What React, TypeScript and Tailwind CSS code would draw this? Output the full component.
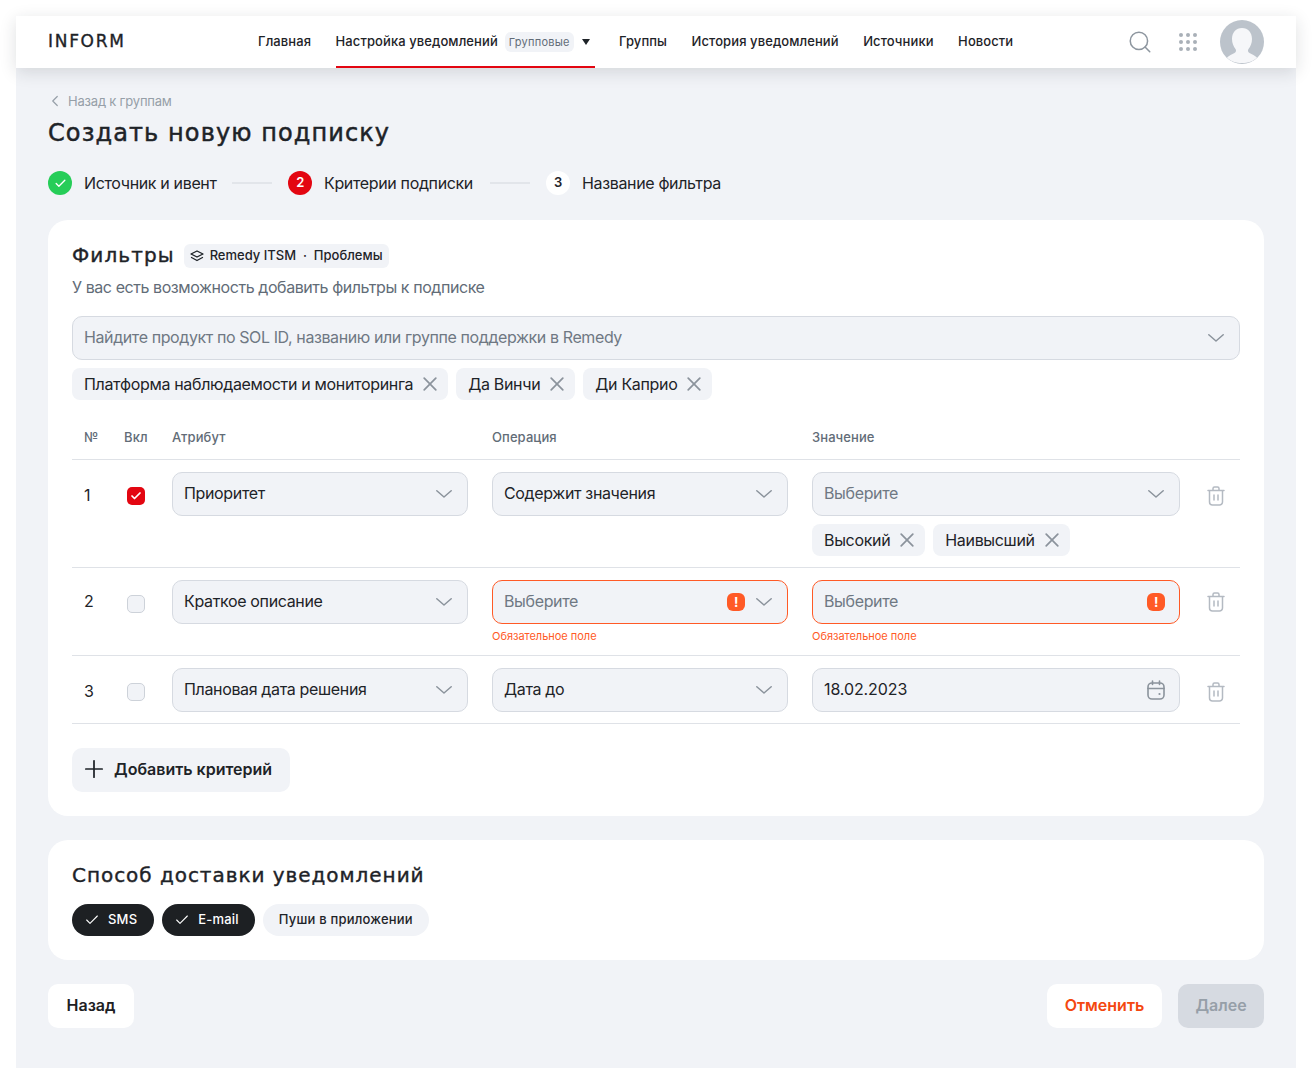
import React from 'react';
import { Check, ChevronLeft, Plus, Search } from 'lucide-react';

const NAV_ITEMS = ['Группы', 'История уведомлений', 'Источники', 'Новости'];

function Chevron() {
  return (
    <svg width="16" height="8" viewBox="0 0 16 8" fill="none" className="text-[#8b939c]">
      <path d="M0.8 0.8 8 7 15.2 0.8" stroke="currentColor" strokeWidth="1.5" strokeLinecap="round" strokeLinejoin="round" />
    </svg>
  );
}

function CloseIcon() {
  return (
    <svg width="14" height="14" viewBox="0 0 14 14" fill="none" className="text-[#8b939c]">
      <path d="M1.2 1.200 12.800 12.800M12.800 1.200 1.200 12.800" stroke="currentColor" strokeWidth="1.7" strokeLinecap="round" />
    </svg>
  );
}

function TrashIcon() {
  return (
    <svg width="18" height="20" viewBox="0 0 18 20" fill="none" className="text-[#b4bac2]">
      <path d="M1 4.5h16M6 4V2.5A1.5 1.5 0 0 1 7.500 1h3A1.500 1.500 0 0 1 12 2.500V4" stroke="currentColor" strokeWidth="1.500" strokeLinecap="round" />
      <path d="M2.500 4.500V16a3 3 0 0 0 3 3h7a3 3 0 0 0 3-3V4.500" stroke="currentColor" strokeWidth="1.500" />
      <path d="M7 9v5M11 9v5" stroke="currentColor" strokeWidth="1.500" strokeLinecap="round" />
    </svg>
  );
}

function CalendarIcon() {
  return (
    <svg width="18" height="20" viewBox="0 0 18 20" fill="none" className="-mr-px text-[#8b939c]">
      <rect x="1" y="3" width="16" height="16" rx="4" stroke="currentColor" strokeWidth="1.600" />
      <path d="M1 8.500h16M5.500 1v3.500M12.500 1v3.500" stroke="currentColor" strokeWidth="1.600" strokeLinecap="round" />
      <circle cx="12.500" cy="14" r="1.100" fill="currentColor" />
    </svg>
  );
}

function LayersIcon() {
  return (
    <svg width="14" height="12" viewBox="0 0 14 12" fill="none" className="text-[#1e2328]">
      <path d="M7 1 13 4 7 7 1 4Z" stroke="currentColor" strokeWidth="1.300" strokeLinejoin="round" />
      <path d="M1.500 7.500 7 10.500 12.500 7.500" stroke="currentColor" strokeWidth="1.300" strokeLinecap="round" strokeLinejoin="round" />
    </svg>
  );
}

function AlertBadge({ className = '' }: { className?: string }) {
  return (
    <span className={`flex h-[18px] w-[18px] items-center justify-center rounded-[6px] bg-[#ff5a26] text-[13px] leading-none font-bold text-white ${className}`}>!</span>
  );
}

function Chip({ label }: { label: string }) {
  return (
    <span className="flex h-8 items-center gap-[10px] rounded-lg bg-[#f1f3f7] pr-[11px] pl-3 text-base tracking-[-0.33px] text-[#1e2328]">
      {label}
      <CloseIcon />
    </span>
  );
}

function Field({ value, placeholder, error, right }: {
  value?: React.ReactNode;
  placeholder?: React.ReactNode;
  error?: boolean;
  right?: React.ReactNode;
}) {
  return (
    <div className={`flex h-11 items-center justify-between rounded-[10px] border bg-[#f1f3f7] pr-[15px] pl-[11px] text-base tracking-[-0.35px] ${error ? 'border-[#ff5a26]' : 'border-[#d6dae1]'}`}>
      <span className={`pb-[2px] ${value ? 'text-[#1e2328]' : 'text-[#6f7883]'}`}>{value || placeholder}</span>
      <span className="flex items-center gap-[11px]">{right ?? <Chevron />}</span>
    </div>
  );
}

function ErrorText() {
  return <p className="mt-1 text-[11px] leading-4 tracking-[-0.02px] text-[#ff5a26]">Обязательное поле</p>;
}

function Checkbox({ checked }: { checked?: boolean }) {
  return checked ? (
    <span className="flex h-[18px] w-[18px] items-center justify-center rounded-[5px] bg-[#e30611]">
      <Check size={12} strokeWidth={3.500} className="text-white" />
    </span>
  ) : (
    <span className="h-[18px] w-[18px] rounded-[5px] border border-[#cdd2d9] bg-[#f1f3f7]" />
  );
}

function Row({ num, checked, attribute, operation, value, numTop, trashTop = 'pt-1' }: {
  num: number;
  checked?: boolean;
  attribute: React.ReactNode;
  operation: React.ReactNode;
  value: React.ReactNode;
  numTop: string;
  trashTop?: string;
}) {
  return (
    <div className="flex border-b border-[#dfe2e7] pt-3 pb-[11px]">
      <div className={`w-[52px] pl-3 text-base leading-6 text-[#1e2328] ${numTop}`}>{num}</div>
      <div className="flex h-11 w-12 items-center pt-[3px] pl-[3px]">
        <Checkbox checked={checked} />
      </div>
      <div className="w-[296px]">{attribute}</div>
      <div className="ml-6 w-[296px]">{operation}</div>
      <div className="ml-6 w-[368px]">{value}</div>
      <div className={`flex h-11 flex-1 items-center justify-end pr-[15px] ${trashTop}`}>
        <TrashIcon />
      </div>
    </div>
  );
}

export default function App() {
  return (
    <div className="h-[1068px] overflow-hidden bg-white px-4 pt-4 font-['Inter',sans-serif]">
      <div className="h-[1052px] bg-[#f1f3f7]">
        <header className="flex h-[52px] items-center bg-white px-8 shadow-[0_4px_16px_rgba(30,35,40,0.14)]">
          <div className="w-[210px] font-['DejaVu_Sans',sans-serif] text-[17px] tracking-[1.7px] text-[#1e2328] [-webkit-text-stroke:0.35px_#1e2328]">INFORM</div>
          <nav className="flex h-full items-stretch gap-[24.5px] text-[13px] font-medium tracking-[0.09px] text-[#1e2328]">
            <span className="flex items-center">Главная</span>
            <span className="flex w-[259px] items-center border-b-2 border-[#e30611] pt-[2px]">
              Настройка уведомлений
              <span className="ml-[7px] rounded-md bg-[#f1f3f7] px-1 py-[2px] text-[11px] font-normal tracking-[0.25px] text-[#626c77]">Групповые</span>
              <svg width="8" height="6" viewBox="0 0 8 6" className="ml-2 text-[#1e2328]">
                <path d="M0 0h8L4 6Z" fill="currentColor" />
              </svg>
            </span>
            {NAV_ITEMS.map((item) => (
              <span key={item} className="flex items-center">{item}</span>
            ))}
          </nav>
          <div className="ml-auto flex items-center">
            <Search size={26} strokeWidth={1.400} className="text-[#8d969f]" />
            <div className="mr-[23px] ml-[26px] grid grid-cols-3 gap-[3px]">
              {Array.from({ length: 9 }).map((_, i) => (
                <span key={i} className="h-1 w-1 rounded-full bg-[#a9b0b8]" />
              ))}
            </div>
            <div className="h-11 w-11 overflow-hidden rounded-full bg-[#bcc3cb]">
              <svg width="44" height="44" viewBox="0 0 44 44">
                <path d="M22 8c-6 0-10 4.500-10 11 0 4 1.500 7.500 3.500 10 1 1.500 0.500 3-1 4-2.500 1.500-5.500 2.500-7.500 4.500C10.500 41.500 16 43 22 43s11.500-1.500 15-5.500c-2-2-5-3-7.500-4.500-1.500-1-2-2.500-1-4 2-2.500 3.500-6 3.500-10 0-6.500-4-11-10-11Z" fill="#f6f7f9" />
              </svg>
            </div>
          </div>
        </header>

        <main className="px-8">
          <div className="flex items-center gap-1 pt-[23px] text-[13px] leading-5 tracking-[-0.2px] text-[#969fa8]">
            <ChevronLeft size={18} strokeWidth={1.600} className="-ml-[2px]" />
            <span>Назад к группам</span>
          </div>
          <h1 className="mt-[6px] font-['DejaVu_Sans',sans-serif] text-2xl leading-8 tracking-[1.1px] text-[#1e2328] [-webkit-text-stroke:0.5px_#1e2328]">Создать новую подписку</h1>

          <div className="mt-[22px] flex h-6 items-center text-base tracking-[-0.35px] whitespace-nowrap text-[#1e2328]">
            <span className="flex h-6 w-6 items-center justify-center rounded-full bg-[#26cd58]">
              <Check size={13} strokeWidth={2.500} className="text-white" />
            </span>
            <span className="ml-3 w-[132px]">Источник и ивент</span>
            <span className="mx-4 h-[2px] w-10 bg-[#e2e5ea]" />
            <span className="flex h-6 w-6 items-center justify-center rounded-full bg-[#e30611] text-[13px] font-semibold text-white">2</span>
            <span className="ml-3 w-[150px]">Критерии подписки</span>
            <span className="mx-4 h-[2px] w-10 bg-[#e2e5ea]" />
            <span className="flex h-6 w-6 items-center justify-center rounded-full bg-white text-[13px] font-semibold">3</span>
            <span className="ml-3">Название фильтра</span>
          </div>

          <section className="mt-[25px] h-[596px] rounded-[20px] bg-white px-6 pt-[23px]">
            <div className="flex h-6 items-center">
              <h2 className="font-['DejaVu_Sans',sans-serif] text-xl tracking-[1.1px] text-[#1e2328] [-webkit-text-stroke:0.4px_#1e2328]">Фильтры</h2>
              <span className="mt-[1px] ml-[9px] flex h-6 items-center gap-[6px] rounded-md bg-[#f1f3f7] px-[6px] text-[13px] font-medium text-[#1e2328]">
                <LayersIcon />
                Remedy ITSM&nbsp; ·&nbsp; Проблемы
              </span>
            </div>
            <p className="mt-2 text-base leading-6 tracking-[-0.43px] text-[#626c77]">У вас есть возможность добавить фильтры к подписке</p>

            <div className="mt-[17px]">
              <Field placeholder={<span className="tracking-[-0.4px]">Найдите продукт по SOL ID, названию или группе поддержки в Remedy</span>} />
            </div>
            <div className="mt-2 flex gap-2">
              <Chip label="Платформа наблюдаемости и мониторинга" />
              <Chip label="Да Винчи" />
              <Chip label="Ди Каприо" />
            </div>

            <div className="mt-4 flex h-11 items-center border-b border-[#dfe2e7] text-[13px] font-medium tracking-[0.09px] text-[#626c77]">
              <span className="w-[52px] pl-3">№</span>
              <span className="w-12">Вкл</span>
              <span className="w-[320px]">Атрибут</span>
              <span className="w-[320px]">Операция</span>
              <span>Значение</span>
            </div>

            <Row
              num={1}
              numTop="pt-[11px]"
              checked
              attribute={<Field value="Приоритет" />}
              operation={<Field value="Содержит значения" />}
              value={
                <>
                  <Field placeholder="Выберите" />
                  <div className="mt-2 flex gap-2">
                    <Chip label="Высокий" />
                    <Chip label="Наивысший" />
                  </div>
                </>
              }
            />
            <Row
              num={2}
              numTop="pt-[9px]"
              trashTop="pt-0"
              attribute={<Field value="Краткое описание" />}
              operation={
                <>
                  <Field placeholder="Выберите" error right={<><AlertBadge /><Chevron /></>} />
                  <ErrorText />
                </>
              }
              value={
                <>
                  <Field placeholder="Выберите" error right={<AlertBadge className="-mr-px" />} />
                  <ErrorText />
                </>
              }
            />
            <Row
              num={3}
              numTop="pt-[11px]"
              attribute={<Field value="Плановая дата решения" />}
              operation={<Field value="Дата до" />}
              value={<Field value={<span className="tracking-[-0.1px]">18.02.2023</span>} right={<CalendarIcon />} />}
            />

            <button className="mt-6 flex h-11 w-[218px] items-center gap-[6px] rounded-[10px] bg-[#f1f3f7] pb-[3px] pl-2 text-base font-semibold text-[#1e2328]">
              <Plus size={28} strokeWidth={1.500} />
              Добавить критерий
            </button>
          </section>

          <section className="mt-6 h-[120px] rounded-[20px] bg-white px-6 pt-[21px]">
            <h2 className="font-['DejaVu_Sans',sans-serif] text-xl leading-7 tracking-[0.96px] text-[#1e2328] [-webkit-text-stroke:0.4px_#1e2328]">Способ доставки уведомлений</h2>
            <div className="mt-[15px] flex gap-2 text-[13px] font-medium tracking-[0.2px]">
              <span className="flex h-8 items-center gap-2 rounded-full bg-[#1d2023] pr-[17px] pl-3 text-white">
                <Check size={16} strokeWidth={1.600} />
                SMS
              </span>
              <span className="flex h-8 items-center gap-2 rounded-full bg-[#1d2023] pr-4 pl-3 text-white">
                <Check size={16} strokeWidth={1.600} />
                E-mail
              </span>
              <span className="flex h-8 items-center rounded-full bg-[#f1f3f7] px-4 text-[#1e2328]">Пуши в приложении</span>
            </div>
          </section>

          <div className="mt-6 flex items-center gap-4 text-base font-semibold">
            <button className="h-11 w-[86px] rounded-[10px] bg-white pb-[2px] text-[#1d2023]">Назад</button>
            <button className="ml-auto h-11 w-[115px] rounded-[10px] bg-white pb-[2px] text-[#f4470f]">Отменить</button>
            <button className="h-11 w-[86px] rounded-[10px] bg-[#d6dae1] pb-[2px] text-[#969fa8]">Далее</button>
          </div>
        </main>
      </div>
    </div>
  );
}
